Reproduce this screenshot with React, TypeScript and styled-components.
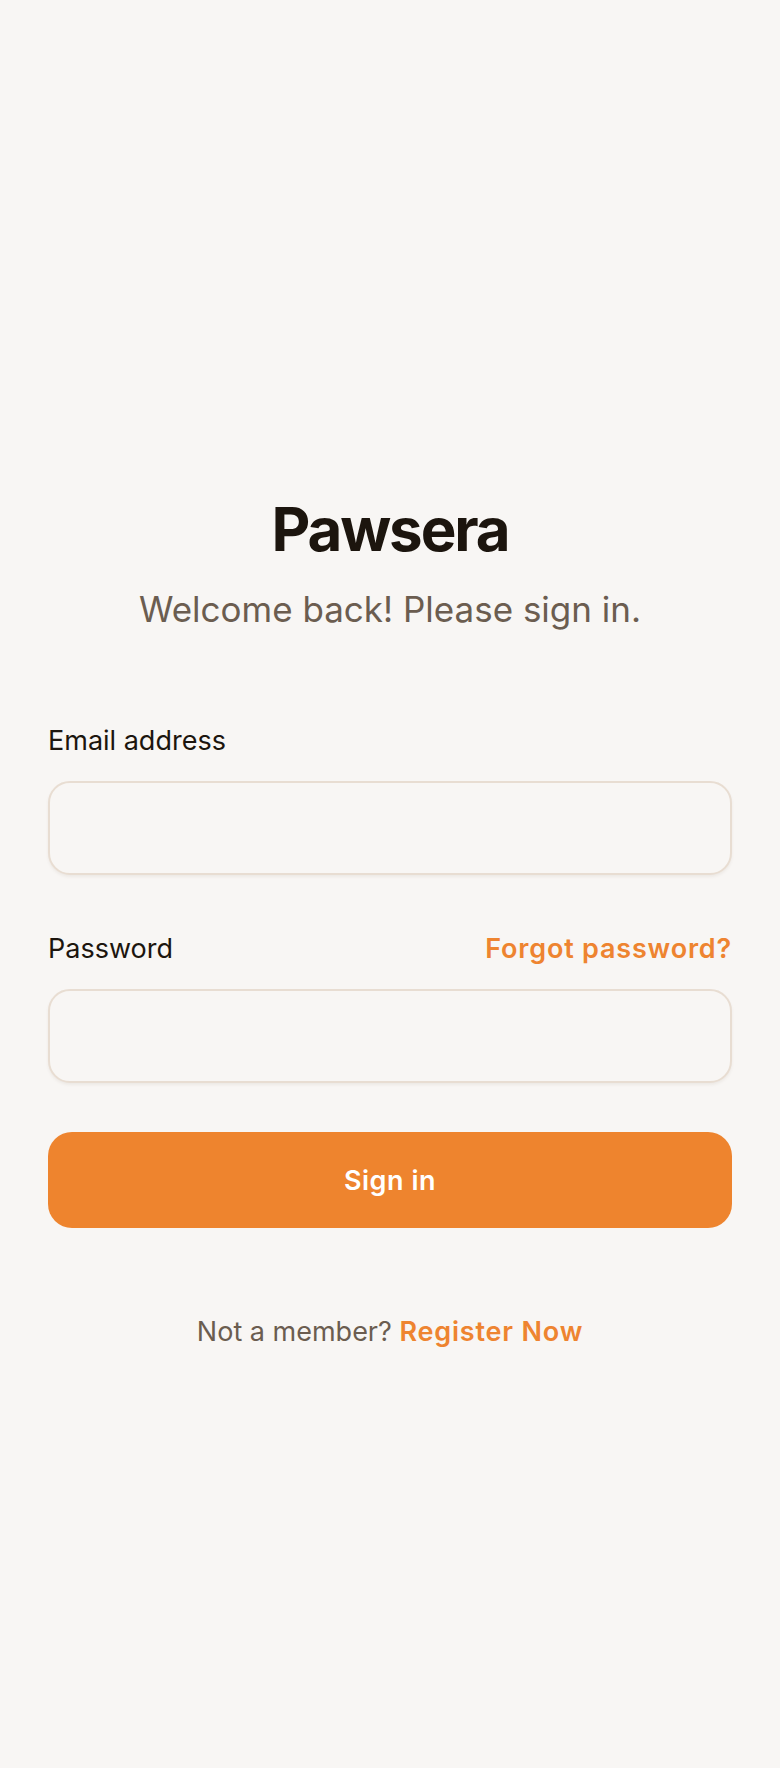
import React from "react";
import styled, { createGlobalStyle } from "styled-components";

const GlobalStyle = createGlobalStyle`
  html, body {
    margin: 0;
    padding: 0;
    background: #f8f6f4;
  }
  * {
    box-sizing: border-box;
  }
`;

const Page = styled.main`
  min-height: 1768px;
  padding: 499px 48px 0;
  font-family: Inter, "Noto Sans", sans-serif;
  background: #f8f6f4;
`;

const Header = styled.header`
  display: flex;
  flex-direction: column;
  align-items: center;
  gap: 30px;
`;

const Title = styled.h1`
  margin: 0;
  font-size: 60px;
  line-height: 60px;
  font-weight: 700;
  letter-spacing: -0.035em;
  color: #1c150e;
`;

const Subtitle = styled.p`
  margin: 0;
  font-size: 35px;
  line-height: 40px;
  font-weight: 400;
  color: #6b5d50;
`;

const Form = styled.form`
  display: flex;
  flex-direction: column;
`;

const Field = styled.div<{ $top: number }>`
  display: flex;
  flex-direction: column;
  gap: 22px;
  margin-top: ${(p) => p.$top}px;
`;

const LabelRow = styled.div`
  display: flex;
  justify-content: space-between;
  align-items: baseline;
`;

const Label = styled.label`
  font-size: 27px;
  line-height: 36px;
  color: #1c150e;
`;

const Link = styled.a`
  font-size: 27px;
  line-height: 36px;
  font-weight: 600;
  letter-spacing: 0.03em;
  color: #ee8430;
  text-decoration: none;
`;

const Input = styled.input`
  height: 94px;
  width: 100%;
  border: 2px solid #e8ddd2;
  border-radius: 22px;
  background: #f8f6f4;
  box-shadow: 0 2px 3px rgba(120, 90, 60, 0.08);
  padding: 0 24px;
  font-family: inherit;
  font-size: 27px;
  outline: none;
`;

const Button = styled.button`
  margin-top: 49px;
  height: 96px;
  width: 100%;
  border: none;
  border-radius: 24px;
  background: #ee842e;
  color: #ffffff;
  font-family: inherit;
  font-size: 27px;
  font-weight: 600;
  letter-spacing: 0.02em;
  cursor: pointer;
`;

const Footer = styled.p`
  margin: 86px 0 0;
  text-align: center;
  font-size: 27px;
  line-height: 36px;
  color: #6b5d50;
`;

export default function App() {
  return (
    <>
      <GlobalStyle />
      <Page>
        <Header>
          <Title>Pawsera</Title>
          <Subtitle>Welcome back! Please sign in.</Subtitle>
        </Header>
        <Form onSubmit={(e) => e.preventDefault()}>
          <Field $top={94}>
            <Label htmlFor="email">Email address</Label>
            <Input id="email" type="email" />
          </Field>
          <Field $top={56}>
            <LabelRow>
              <Label htmlFor="password">Password</Label>
              <Link href="#">Forgot password?</Link>
            </LabelRow>
            <Input id="password" type="password" />
          </Field>
          <Button type="submit">Sign in</Button>
        </Form>
        <Footer>
          Not a member? <Link href="#">Register Now</Link>
        </Footer>
      </Page>
    </>
  );
}
